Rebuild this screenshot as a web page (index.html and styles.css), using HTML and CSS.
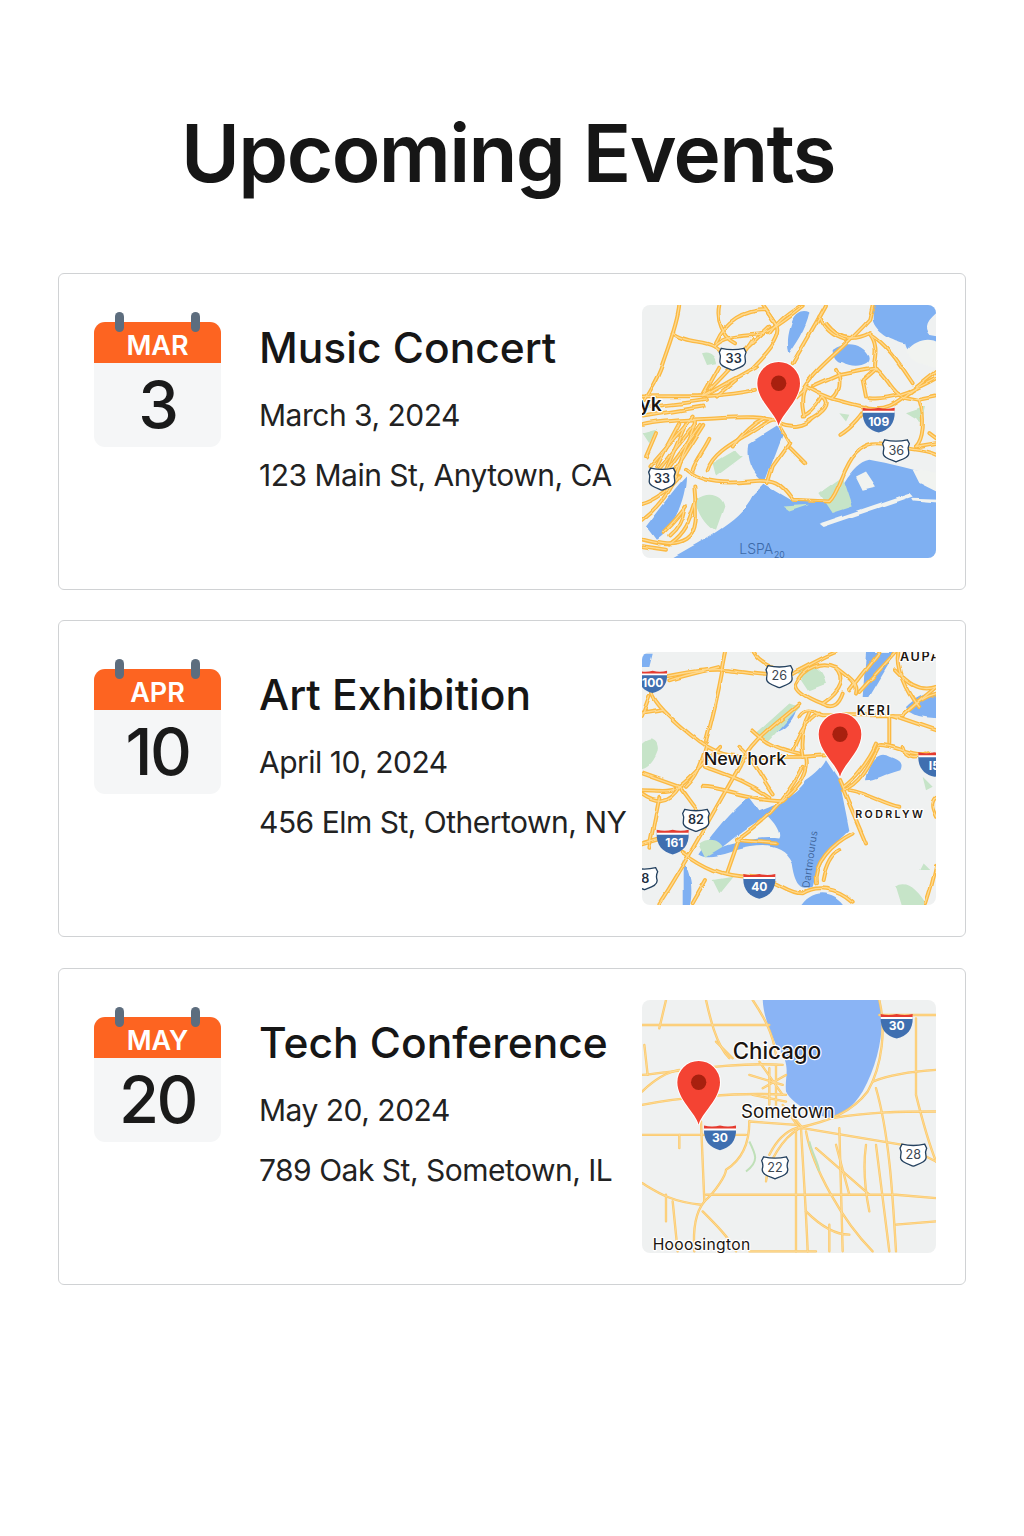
FILE: index.html
```html
<!DOCTYPE html>
<html lang="en">
<head>
<meta charset="utf-8">
<title>Upcoming Events</title>
<link rel="stylesheet" href="styles.css">
</head>
<body>
<svg class="defs" width="0" height="0" aria-hidden="true">
  <defs>
    <filter id="wobble" x="-5%" y="-5%" width="110%" height="110%">
      <feTurbulence type="fractalNoise" baseFrequency=".012" numOctaves="2" seed="4" result="n"/>
      <feDisplacementMap in="SourceGraphic" in2="n" scale="12" xChannelSelector="R" yChannelSelector="G"/>
      <feGaussianBlur stdDeviation="1.5"/>
    </filter>
    <g id="pin">
      <path class="pin-body" d="M0 128C-8 92-64 52-64 0A64 64 0 0 1 64 0C64 52 8 92 0 128Z"/>
      <circle class="pin-dot" r="23"/>
    </g>
    <path id="shield-us" d="M-34-32Q0-24 34-32L40-20Q34-8 38 4C42 22 14 28 0 34C-14 28-42 22-38 4Q-34-8-40-20Z"/>
    <g id="shield-i">
      <path class="i-blue" d="M-48-26H48C50 10 30 32 0 38C-30 32-50 10-48-26Z"/>
      <path class="i-white" d="M-48-32H48V-21H-48Z"/>
      <path class="i-red" d="M-48-36Q-24-30 0-36Q24-30 48-36V-27H-48Z"/>
    </g>
    <g id="roads1">
      <path d="M130 15C125 70 100 130 80 190S40 270 25 300"/>
      <path d="M110 100C150 130 200 120 235 140S270 180 285 190"/>
      <path d="M18 290C100 285 220 300 360 270"/>
      <path d="M18 375C80 360 170 360 250 355S380 350 430 365"/>
      <path d="M40 500L170 350M60 520L180 370M85 525L195 375M110 525L205 375"/>
      <path d="M18 660C70 620 110 570 130 500S180 390 180 360"/>
      <path d="M150 510C190 545 250 555 340 545S440 560 470 600L580 605C610 580 620 500 660 460S730 430 760 435C800 450 860 445 900 465"/>
      <path d="M18 720C60 730 110 745 150 720S180 630 175 560"/>
      <path d="M80 700C100 680 130 650 150 620M100 710C125 690 140 660 145 630"/>
      <path d="M215 510C230 460 290 430 340 400S410 350 430 370"/>
      <path d="M430 380L460 430L410 500L395 550M460 445L505 490"/>
      <path d="M240 130C270 60 330 30 390 30L420 75"/>
      <path d="M235 140C270 100 350 110 380 100S450 60 500 20"/>
      <path d="M285 190L400 80M220 270C260 230 320 170 350 120"/>
      <path d="M470 190C510 120 540 70 570 15"/>
      <path d="M500 270C540 200 620 150 700 60L710 15"/>
      <path d="M570 70C600 110 640 130 700 100C740 150 700 200 720 205C760 240 770 280 800 290"/>
      <path d="M510 260C560 290 600 300 680 320S780 310 900 215"/>
      <path d="M700 295C760 300 820 280 900 235"/>
      <path d="M610 405C650 380 680 340 690 320"/>
      <path d="M600 210C620 240 610 280 590 295M720 205L680 240L690 290"/>
      <path d="M850 300C870 360 860 420 840 440M880 400L900 415"/>
      <path d="M500 350C540 330 550 300 560 290"/>
      <path d="M430 370C470 385 510 380 530 355M18 350L200 320M200 290L360 200"/>
      <path d="M18 740L90 750"/>
      <path d="M250 15C240 60 260 110 300 130M380 15L420 75C440 110 380 170 350 200M490 20C440 50 420 75 400 100"/>
      <path d="M550 50C560 80 590 110 630 120M700 100C760 140 790 190 830 250M720 205C680 210 640 220 610 225L530 260"/>
      <path d="M18 320C80 320 140 310 210 300M60 400L30 470M130 370L60 500M150 370L90 510M220 420C200 460 180 480 170 510"/>
      <path d="M290 440C320 400 350 370 385 355M180 600C160 660 150 700 100 735M18 610C60 600 110 560 130 530"/>
      <path d="M505 350C500 330 490 290 510 260M440 330C470 300 490 280 510 265M800 290L850 300L900 290"/>
      <path d="M560 290C590 310 560 340 520 360M840 440L900 430M250 200L200 290M300 240L240 290"/>
    </g>
    <g id="roads2">
      <path d="M18 100C100 90 200 60 280 70S390 90 470 80C530 50 560 30 600 15"/>
      <path d="M45 130C50 170 120 230 190 285S320 330 500 330L570 325"/>
      <path d="M270 15C260 60 250 140 210 285"/>
      <path d="M18 430C60 430 100 440 130 420C180 380 230 320 250 300M18 210L40 150"/>
      <path d="M70 770C130 680 220 520 310 360C350 270 440 220 490 170"/>
      <path d="M140 615C200 660 260 690 340 690S450 740 500 740C540 715 600 720 650 765"/>
      <path d="M200 420C260 420 340 460 440 460C500 410 520 370 510 330"/>
      <path d="M300 580C370 530 440 480 500 360"/>
      <path d="M270 680L305 580M210 700L170 770"/>
      <path d="M480 110C500 60 560 40 600 60C630 90 620 130 560 170C510 150 480 130 480 110Z"/>
      <path d="M670 135L780 15M640 130L730 15M350 15C370 50 420 70 470 80"/>
      <path d="M490 210C510 180 540 200 560 205L800 205L900 120"/>
      <path d="M760 205V290M790 15C780 60 810 130 850 180"/>
      <path d="M610 400L690 590M620 430C680 410 710 330 730 295C770 290 820 330 880 320"/>
      <path d="M640 430C700 440 740 470 790 480M900 450C880 470 890 490 900 510"/>
      <path d="M540 710C530 650 590 590 650 560M560 700C570 650 590 620 610 610"/>
      <path d="M770 205L900 250M310 300C350 330 380 400 410 440"/>
      <path d="M18 590L70 575M70 450L40 600M18 380L130 420"/>
      <path d="M100 100C130 90 170 80 250 60M18 200L80 190M150 420C170 400 190 380 210 300M130 420C160 460 180 490 190 500"/>
      <path d="M210 360C260 380 330 400 400 450M350 250C400 300 450 310 490 320M470 310C490 260 510 220 550 200"/>
      <path d="M600 60C640 90 670 110 660 140M800 205C840 170 860 150 900 140M780 70C800 90 840 140 900 120"/>
      <path d="M720 290C700 340 650 400 620 420M800 300C810 340 850 330 870 320M300 580L420 590M500 330C490 280 500 240 520 200"/>
      <path d="M560 170C590 190 610 170 620 140M18 440C60 470 100 470 130 420M880 320L900 340M900 660C890 710 880 740 870 770"/>
    </g>
    <g id="roads3">
      <path d="M18 90H400M210 15C220 60 240 150 280 190M350 15C380 60 410 110 420 180"/>
      <path d="M18 240C120 230 300 200 440 210M18 330C120 310 300 290 450 300"/>
      <path d="M18 420H330M18 290C60 250 100 230 130 225"/>
      <path d="M195 380L205 620C180 650 170 700 175 770"/>
      <path d="M205 620C240 590 270 540 270 525C310 500 340 460 340 380"/>
      <path d="M400 480C420 440 450 410 480 400C580 380 650 350 695 290C740 210 750 100 730 15"/>
      <path d="M390 560C395 500 440 430 490 400"/>
      <path d="M480 400V770M495 400C500 500 510 640 515 770M510 410C530 520 620 680 710 770"/>
      <path d="M500 400L800 450L900 500M590 370C700 350 800 350 900 350"/>
      <path d="M720 280C760 420 770 600 780 770M840 70V300M900 225C820 230 760 240 710 260"/>
      <path d="M18 565C60 590 100 620 195 630M210 600H780L900 610"/>
      <path d="M110 620L125 770M610 400L620 770M510 650C560 700 600 720 640 720M780 690L900 680"/>
      <path d="M200 650C240 690 280 730 300 770M730 60H900"/>
      <path d="M90 600V680M130 420V460M25 150L35 240"/>
      <path d="M370 200L440 300M380 280L450 240M400 220V330M420 210V340M340 240L440 270M350 300L450 320"/>
      <path d="M440 330L490 400M450 340L500 400M340 380L480 390M720 450L760 770M600 450L640 600"/>
      <path d="M690 450C680 520 690 600 700 650M240 140L290 190M70 100L90 15M540 460L700 600"/>
      <path d="M340 770H540M580 690V770M840 300C860 380 880 450 900 500"/>
    </g>
  </defs>
</svg>

<main class="page">
  <h1 class="title">Upcoming Events</h1>
  <section class="list">
    <article class="card">
      <div class="cal">
        <i class="ring ring-l"></i><i class="ring ring-r"></i>
        <div class="cal-month">MAR</div>
        <div class="cal-day">3</div>
      </div>
      <div class="info">
        <h2 class="name">Music Concert</h2>
        <p class="line">March 3, 2024</p>
        <p class="line">123 Main St, Anytown, CA</p>
      </div>
      <svg class="map" viewBox="18 15 882 760" preserveAspectRatio="none" role="img" aria-label="Map">
        <rect class="land" x="18" y="15" width="882" height="760"/>
        <g class="soft">
          <path class="water" d="M90 785C200 720 310 670 350 590L385 555L470 605L580 610C610 590 640 490 700 480C760 490 830 510 910 530V785Z"/>
          <path class="water" d="M340 430L420 380L440 405L385 550C350 520 330 480 340 430Z"/>
          <path class="water" d="M710 5H910V30C870 60 860 80 880 105L910 110V200C860 190 820 170 810 130C770 120 720 100 710 60Z"/>
          <path class="water" d="M590 150C630 120 680 130 700 170C710 200 650 210 620 190C600 190 590 170 590 150Z"/>
          <path class="water" d="M30 680C70 630 110 570 150 530C150 600 110 690 60 720Z"/>
          <path class="water" d="M470 60C480 40 500 30 520 40C510 90 480 130 460 160C450 120 460 90 470 60Z"/>
          <path class="sand" d="M815 150C840 120 880 110 910 130V205C870 200 820 190 815 150ZM660 530L690 515L720 560L680 570ZM830 510L910 520V580L850 550Z"/>
          <path class="green" d="M195 160C220 150 240 170 240 190L210 195ZM20 400L60 390L40 430ZM180 600C220 570 260 590 265 620L240 690C220 680 190 650 180 600ZM550 580L620 530L650 620L590 640ZM810 340L870 320L860 370ZM440 620L520 615L460 635ZM610 340L640 345L630 365ZM230 490L300 450L320 470L240 530Z"/>
          <path class="sand" d="M548 672L820 580L830 590L560 682Z"/>
          <path class="sand" d="M825 597L910 600V612L830 605Z"/>
          <use href="#roads1" class="road-case"/>
          <use href="#roads1" class="road-core"/>
        </g>
        <use href="#shield-us" class="shield" transform="translate(290 177)"/>
        <text class="sh-text" x="293" y="190">33</text>
        <use href="#shield-us" class="shield" transform="translate(78 537)"/>
        <text class="sh-text" x="78" y="549">33</text>
        <use href="#shield-us" class="shield" transform="translate(780 452)"/>
        <text class="sh-text sh-thin" x="781" y="465">36</text>
        <use href="#shield-i" transform="translate(728 360)"/>
        <text class="i-text" x="728" y="378">109</text>
        <text class="label label-big" x="10" y="333">yk</text>
        <text class="blue-label" x="310" y="762">LSPA</text>
        <text class="blue-sub" x="414" y="774">20</text>
        <use href="#pin" transform="translate(428 250)"/>
      </svg>
    </article>

    <article class="card">
      <div class="cal">
        <i class="ring ring-l"></i><i class="ring ring-r"></i>
        <div class="cal-month">APR</div>
        <div class="cal-day">10</div>
      </div>
      <div class="info">
        <h2 class="name">Art Exhibition</h2>
        <p class="line">April 10, 2024</p>
        <p class="line">456 Elm St, Othertown, NY</p>
      </div>
      <svg class="map map-square" viewBox="18 15 882 760" preserveAspectRatio="none" role="img" aria-label="Map">
        <rect class="land" x="18" y="15" width="882" height="760"/>
        <g class="soft">
          <path class="water" d="M570 340L610 400L640 550C600 590 560 620 530 720C500 730 480 720 470 650C440 590 380 590 300 610C270 620 220 640 190 620C230 560 290 490 340 450L370 490C420 470 480 450 510 400C540 380 560 360 570 340Z"/>
          <path class="sand" d="M260 600C300 570 340 530 400 510C420 530 440 560 430 575C380 570 320 580 260 600Z"/>
          <path class="water" d="M490 785C520 730 590 720 630 785Z"/>
          <path class="water" d="M810 180C840 150 880 130 910 140V215C870 210 820 210 810 180Z"/>
          <path class="water" d="M690 400C700 340 730 310 760 330C790 340 800 350 790 370C750 380 720 400 690 400Z"/>
          <path class="water" d="M690 15H780L700 150H680Z"/>
          <path class="water" d="M390 235C420 215 450 200 480 190C470 230 430 260 400 260Z"/>
          <path class="water" d="M140 640C160 680 175 720 160 785H140Z"/>
          <path class="water" d="M10 20H50L40 60H10Z"/>
          <path class="green" d="M10 300C40 260 70 280 65 310C50 350 30 370 10 370ZM360 260L460 170L490 180L400 280ZM480 70C520 40 560 60 570 110L520 130ZM190 590C220 570 250 580 260 600L210 630ZM780 720C810 700 840 720 880 785H800ZM230 700L290 690L250 740ZM860 650L880 670L850 670ZM860 390L890 420L870 430Z"/>
          <use href="#roads2" class="road-case"/>
          <use href="#roads2" class="road-core"/>
        </g>
        <text class="blue-script" transform="translate(520 725) rotate(-82)">Dartmourus</text>
        <use href="#shield-us" class="shield" transform="translate(430 88)"/>
        <text class="sh-text sh-thin" x="430" y="100">26</text>
        <use href="#shield-us" class="shield" transform="translate(180 520)"/>
        <text class="sh-text" x="180" y="533">82</text>
        <use href="#shield-us" class="shield" transform="translate(25 695)"/>
        <text class="sh-text" x="28" y="710">8</text>
        <use href="#shield-i" transform="translate(50 104) scale(.9)"/>
        <text class="i-text" x="50" y="120">100</text>
        <use href="#shield-i" transform="translate(110 585)"/>
        <text class="i-text" x="115" y="602">161</text>
        <use href="#shield-i" transform="translate(370 718)"/>
        <text class="i-text" x="370" y="733">40</text>
        <use href="#shield-i" transform="translate(895 352)"/>
        <text class="i-text" x="895" y="368">I5</text>
        <text class="label label-mid" x="203" y="355">New hork</text>
        <text class="label label-caps" x="662" y="205">KERI</text>
        <text class="label label-caps" x="792" y="43">AUPA</text>
        <text class="label label-caps label-small" x="658" y="515">RODRLYW</text>
        <use href="#pin" transform="translate(612 262)"/>
      </svg>
    </article>

    <article class="card">
      <div class="cal">
        <i class="ring ring-l"></i><i class="ring ring-r"></i>
        <div class="cal-month">MAY</div>
        <div class="cal-day">20</div>
      </div>
      <div class="info">
        <h2 class="name">Tech Conference</h2>
        <p class="line">May 20, 2024</p>
        <p class="line">789 Oak St, Sometown, IL</p>
      </div>
      <svg class="map" viewBox="18 15 882 760" preserveAspectRatio="none" role="img" aria-label="Map">
        <rect class="land" x="18" y="15" width="882" height="760"/>
        <g class="soft-flat">
          <path class="lake" d="M380 5H730C750 90 730 200 680 290C650 340 610 365 590 370C540 365 470 330 450 290C445 240 470 210 420 150C400 100 380 60 380 5Z"/>
          <use href="#roads3" class="road-case road-thin"/>
          <use href="#roads3" class="road-core road-thin-core"/>
          <path class="green-line" d="M340 440C360 480 370 500 330 530M520 440C530 480 545 500 550 530"/>
        </g>
        <use href="#shield-us" class="shield" transform="translate(832 480)"/>
        <text class="sh-text sh-thin" x="832" y="492">28</text>
        <use href="#shield-us" class="shield" transform="translate(417 518)"/>
        <text class="sh-text sh-thin" x="417" y="531">22</text>
        <use href="#shield-i" transform="translate(252 428)"/>
        <text class="i-text" x="252" y="443">30</text>
        <use href="#shield-i" transform="translate(782 93)"/>
        <text class="i-text" x="782" y="104">30</text>
        <text class="label label-city" x="290" y="191">Chicago</text>
        <text class="label label-town" x="315" y="368">Sometown</text>
        <text class="label label-corner" x="50" y="765">Hooosington</text>
        <use href="#pin" transform="translate(188 262)"/>
      </svg>
    </article>
  </section>
</main>
</body>
</html>
```
FILE: styles.css
```css
* { box-sizing: border-box; }
html, body { margin: 0; background: #fff; }
body { font-family: Inter, "Liberation Sans", sans-serif; color: #1a1a1a; }
.defs { position: absolute; }

.page { padding: 106px 58px 0; }
.title {
  margin: 0 0 73px;
  padding-right: 8px;
  text-align: center;
  font-size: 80px;
  line-height: 94px;
  font-weight: 600;
  letter-spacing: -1.6px;
  color: #161616;
}

.list { display: flex; flex-direction: column; gap: 30.7px; }
.card {
  height: 316.8px;
  display: flex;
  align-items: flex-start;
  padding: 31px 29px 31px 35px;
  background: #fff;
  border: 1px solid #d0d2d4;
  border-radius: 6px;
}

.cal {
  position: relative;
  flex: none;
  width: 127px;
  height: 125px;
  margin-top: 16.7px;
  margin-right: 38px;
  background: #f5f6f7;
  border-radius: 11px;
}
.ring {
  position: absolute;
  top: -10px;
  width: 9px;
  height: 20px;
  background: #5d6d7e;
  border-radius: 4.5px;
  z-index: 1;
}
.ring-l { left: 21px; }
.ring-r { left: 97px; }
.cal-month {
  height: 41px;
  padding-top: 6px;
  background: #fd6421;
  border-radius: 11px 11px 0 0;
  color: #fff;
  text-align: center;
  font-size: 27px;
  line-height: 36px;
  font-weight: 600;
}
.cal-day {
  text-align: center;
  font-size: 65px;
  line-height: 84px;
  font-weight: 500;
  letter-spacing: -2.5px;
  color: #1a1a1a;
}

.info { flex: 1; min-width: 0; padding-top: 17px; white-space: nowrap; }
.name {
  margin: 0 0 22px;
  font-size: 42.5px;
  line-height: 52px;
  font-weight: 500;
  letter-spacing: 0;
  color: #161616;
}
.line {
  margin: 0 0 22px;
  font-size: 30px;
  line-height: 38px;
  font-weight: 400;
  letter-spacing: -0.5px;
  color: #222;
}

.map {
  display: block;
  flex: none;
  width: 294px;
  height: 253px;
  border-radius: 8px;
}
.land { fill: #eff1f1; }
.soft { filter: url(#wobble); }
.soft-flat { filter: blur(.5px); }
.water { fill: #7fb0f2; }
.lake { fill: #8ab4f5; }
.green { fill: #c6e4c8; }
.sand { fill: #f1f3f0; }
.green-line { fill: none; stroke: #bfe0b8; stroke-width: 6; }

.road-case { fill: none; stroke: #fbb942; stroke-width: 12; stroke-linecap: round; stroke-linejoin: round; }
.road-core { fill: none; stroke: #fed98f; stroke-width: 4; stroke-linecap: round; stroke-linejoin: round; }
.road-thin { stroke: #fcc968; stroke-width: 7; }
.road-thin-core { stroke: #fee0a8; stroke-width: 2; }

.pin-body { fill: #f44333; stroke: #fff; stroke-width: 6; paint-order: stroke; }
.pin-dot { fill: #a8200f; }

.shield { fill: #fff; stroke: #24415f; stroke-width: 4; }
.i-blue { fill: #3f6fb0; }
.i-white { fill: #fff; }
.i-red { fill: #e53c30; }

.sh-text, .i-text, .label, .blue-label, .blue-sub, .blue-script { font-family: Inter, "Liberation Sans", sans-serif; }
.sh-text { font-size: 38px; font-weight: 600; text-anchor: middle; fill: #1f2f40; }
.sh-thin { font-weight: 400; fill: #3c4650; }
.i-text { font-size: 36px; font-weight: 700; text-anchor: middle; fill: #fff; }
.label { fill: #1a1410; stroke: #fff; stroke-width: 7; paint-order: stroke; stroke-linejoin: round; }
.label-big { font-size: 58px; font-weight: 600; }
.label-mid { font-size: 54px; font-weight: 500; }
.label-caps { font-size: 38px; font-weight: 600; letter-spacing: 5px; }
.label-small { font-size: 32px; letter-spacing: 7px; }
.label-city { font-size: 67px; font-weight: 500; }
.label-town { font-size: 56px; font-weight: 400; }
.label-corner { font-size: 47px; font-weight: 400; letter-spacing: 1px; }
.blue-label { font-size: 42px; font-weight: 300; fill: #3d6aa8; }
.blue-sub { font-size: 26px; fill: #3d6aa8; }
.blue-script { font-size: 30px; font-weight: 300; fill: #35598f; letter-spacing: 1px; }
```
